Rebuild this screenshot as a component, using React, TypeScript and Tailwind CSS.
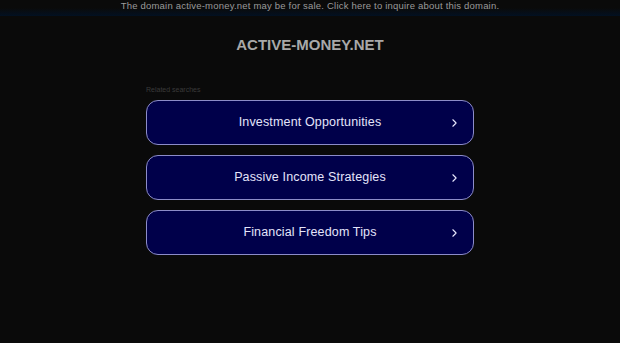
import { ChevronRight } from "lucide-react";

const searches = [
  "Investment Opportunities",
  "Passive Income Strategies",
  "Financial Freedom Tips",
];

export default function App() {
  return (
    <div
      className="min-h-[343px] bg-[#0a0a0a] text-white"
      style={{ fontFamily: '"Liberation Sans", Arial, sans-serif' }}
    >
      <div className="flex h-[16px] items-start justify-center bg-gradient-to-b from-[#0a0a0a] from-50% to-[#021022]">
        <a className="text-[9.5px] leading-[12px] tracking-[0.2px] text-[#9a9a9a]">
          The domain active-money.net may be for sale. Click here to inquire about this domain.
        </a>
      </div>

      <h1 className="mt-[20px] text-center text-[15px] font-bold leading-[18px] text-[#a8a8a8]">
        ACTIVE-MONEY.NET
      </h1>

      <div className="mx-auto mt-[32px] w-[328px]">
        <p className="text-[7px] leading-[8px] text-[#3a3a3a]">Related searches</p>
        <div className="mt-[6px] flex flex-col gap-[10px]">
          {searches.map((s) => (
            <a
              key={s}
              className="relative flex h-[45px] items-center justify-center rounded-[12px] border border-[#8c8cc8] bg-[#00004a]"
            >
              <span className="text-[12.5px] font-normal tracking-[0.15px] text-[#e4e4fa]">{s}</span>
              <ChevronRight
                className="absolute right-[12px] top-1/2 size-[13px] -translate-y-1/2 text-[#e4e4fa]"
                strokeWidth={2}
              />
            </a>
          ))}
        </div>
      </div>
    </div>
  );
}
